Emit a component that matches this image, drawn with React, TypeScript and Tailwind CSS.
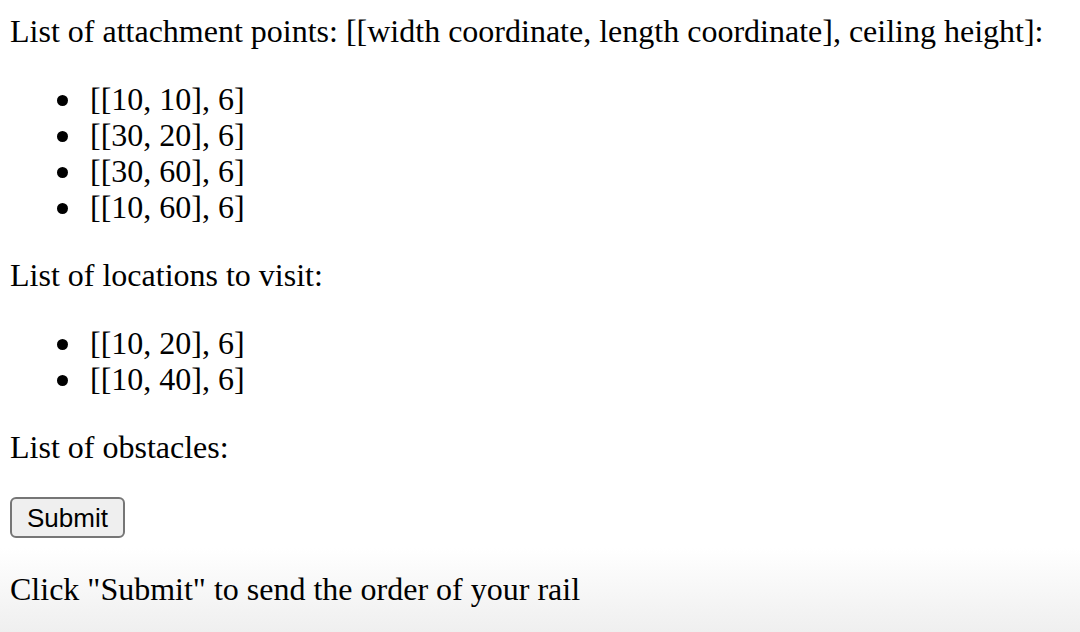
import React from "react";

const attachmentPoints = ["[[10, 10], 6]", "[[30, 20], 6]", "[[30, 60], 6]", "[[10, 60], 6]"];
const locations = ["[[10, 20], 6]", "[[10, 40], 6]"];

const PointList = ({ items }: { items: string[] }) => (
  <ul className="my-[32px] pl-[80px]">
    {items.map((item, index) => (
      <li key={index} className="flex items-center">
        <span className="-ml-[33px] mr-[22px] mt-[3px] size-[11px] shrink-0 rounded-full bg-black" />
        <span>{item}</span>
      </li>
    ))}
  </ul>
);

export default function App() {
  return (
    <div className="h-[632px] overflow-hidden bg-[linear-gradient(to_bottom,#ffffff_548px,#efefef_632px)] px-[10px] pt-[13px] font-['Liberation_Serif','Times_New_Roman',serif] text-[32px] leading-[36px] text-black">
      <p>List of attachment points: [[width coordinate, length coordinate], ceiling height]:</p>
      <PointList items={attachmentPoints} />

      <p>List of locations to visit:</p>
      <PointList items={locations} />

      <p>List of obstacles:</p>

      {/* Form */}
      <div className="my-[32px]">
        <button className="h-[41px] w-[115px] rounded-[6px] border-2 border-[#767676] bg-[#efefef] font-['Liberation_Sans',Arial,sans-serif] text-[26px] leading-none text-black">
          Submit
        </button>
      </div>

      <p className="pt-[1px]">Click "Submit" to send the order of your rail</p>
    </div>
  );
}
